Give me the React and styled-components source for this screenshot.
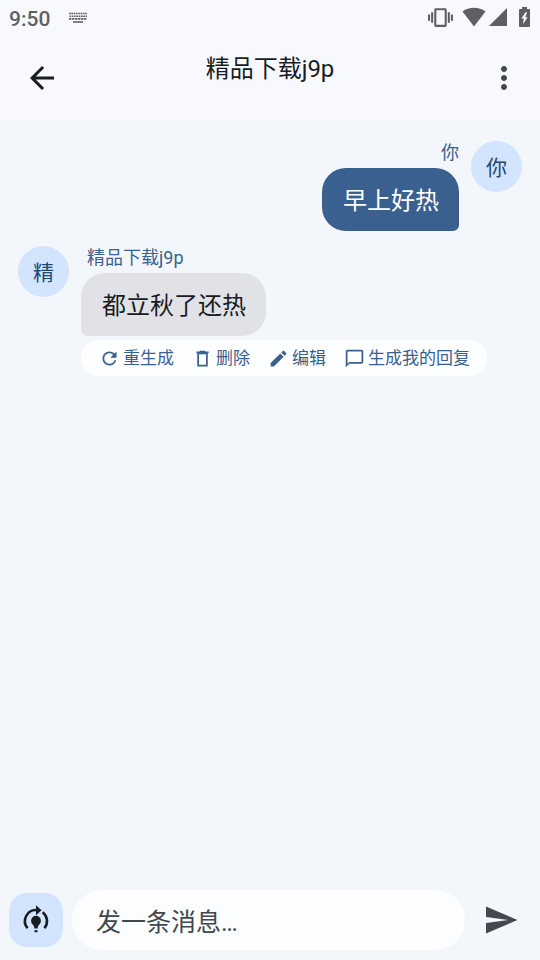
import React, { useState } from 'react'
import styled, { createGlobalStyle } from 'styled-components'
import {
    MdArrowBack,
    MdMoreVert,
    MdRefresh,
    MdEdit,
    MdChatBubbleOutline,
    MdSend,
    MdVibration,
} from 'react-icons/md'

const GlobalStyle = createGlobalStyle`
* {
box-sizing: border-box;
}
body {
margin: 0;
background: #F3F7FC;
font-family: Roboto, 'Noto Sans CJK SC', sans-serif;
color: #191C20;
}
button, input {
font-family: inherit;
border: none;
padding: 0;
}
svg {
display: block;
flex: none;
}
`;

const PageWrapper = styled.div`
display: flex;
flex-direction: column;
min-height: 100vh;
`;

const TopWrapper = styled.header`
background: #F8F9FF;
`;

const StatusBar = styled.div`
display: flex;
align-items: center;
height: 36px;
padding: 0 10px 0 9px;
color: #5F6064;
`;

const Clock = styled.span`
font-size: 21px;
font-weight: 500;
line-height: 24px;
padding-top: 2px;
margin-right: 18px;
`;

const StatusIcons = styled.div`
display: flex;
align-items: center;
margin-left: auto;
padding-bottom: 2px;
`;

const WifiIcon = styled.svg`
margin: 0 3px 0 9px;
`;

const SignalIcon = styled.svg`
margin-right: 12px;
`;

const AppBar = styled.div`
display: flex;
align-items: center;
height: 84px;
padding: 0 18px 0 24px;
`;

const IconButton = styled.button`
display: flex;
align-items: center;
justify-content: center;
background: none;
color: ${props => props.$color || '#191C20'};
cursor: pointer;
`;

const Title = styled.h1`
flex: 1;
margin: 0;
padding: 0 6px 18px 0;
font-size: 24px;
font-weight: 400;
line-height: 28px;
text-align: center;
`;

const MessageList = styled.main`
flex: 1;
display: flex;
flex-direction: column;
gap: 15px;
padding: 21px 18px;
`;

const MessageRow = styled.div`
display: flex;
flex-direction: ${props => props.$own ? 'row-reverse' : 'row'};
align-items: flex-start;
gap: 12px;
`;

const Avatar = styled.div`
display: flex;
align-items: center;
justify-content: center;
width: 51px;
height: 51px;
padding-top: 2px;
border-radius: 50%;
background: #D3E4FF;
color: #1F4876;
font-size: 21px;
line-height: 24px;
`;

const MessageBody = styled.div`
display: flex;
flex-direction: column;
align-items: ${props => props.$own ? 'flex-end' : 'flex-start'};
`;

const Sender = styled.div`
padding: ${props => props.$own ? '0' : '0 6px'};
margin-bottom: 3px;
font-size: 18px;
line-height: 24px;
color: #3A608F;
`;

const Bubble = styled.div`
padding: 18px 20px 14px 21px;
border-radius: ${props => props.$own ? '24px 24px 6px 24px' : '24px 24px 24px 6px'};
background: ${props => props.$own ? '#3A608F' : '#E1E2E8'};
color: ${props => props.$own ? '#FFFFFF' : '#191C20'};
font-size: 24px;
line-height: 31px;
`;

const Actions = styled.div`
display: flex;
align-items: center;
gap: 18px;
height: 36px;
margin-top: 4px;
padding: 0 17px 0 18px;
border-radius: 18px;
background: #FDFEFF;
`;

const ActionButton = styled.button`
display: flex;
align-items: center;
gap: 3px;
background: none;
color: #3A608F;
font-size: 17px;
line-height: 24px;
white-space: nowrap;
cursor: pointer;
`;

const Composer = styled.form`
display: flex;
align-items: center;
gap: 9px;
padding: 0 21px 10px 9px;
`;

const ModeButton = styled.button`
display: flex;
align-items: center;
justify-content: center;
width: 54px;
height: 54px;
border-radius: 18px;
background: #D3E4FF;
color: #191C20;
cursor: pointer;
`;

const MessageInput = styled.input`
flex: 1;
min-width: 0;
height: 60px;
margin-right: 9px;
padding: 4px 24px 0;
border-radius: 30px;
background: #FCFDFF;
color: #191C20;
font-size: 25px;
line-height: 30px;
outline: none;

&::placeholder {
color: #43474E;
opacity: 1;
}
`;

function DeleteIcon({ size }) {
    return (
        <svg width={size} height={size} viewBox="0 0 24 24" fill="currentColor">
            <path d="M15 4V3H9v1H5v2h1v15h12V6h1V4h-4zm1 15H8V7h8v12z" />
        </svg>
    )
}

const messages = [
    { id: 1, own: true, sender: '你', avatar: '你', text: '早上好热' },
    { id: 2, own: false, sender: '精品下载j9p', avatar: '精', text: '都立秋了还热' },
]

const actions = [
    { label: '重生成', Icon: MdRefresh },
    { label: '删除', Icon: DeleteIcon },
    { label: '编辑', Icon: MdEdit },
    { label: '生成我的回复', Icon: MdChatBubbleOutline },
]

function KeyboardIcon() {
    return (
        <svg width="20" height="12" viewBox="0 0 20 12" stroke="currentColor" fill="none">
            <path d="M1 1.5h18" strokeWidth="1.6" strokeDasharray="1.7 0.6" />
            <path d="M1.5 4.2h17.5" strokeWidth="1.6" strokeDasharray="1.7 0.6" />
            <path d="M1 6.9h18" strokeWidth="1.6" strokeDasharray="2.4 0.6" />
            <path d="M5 10h10" strokeWidth="1.6" />
        </svg>
    )
}

function BatteryIcon() {
    return (
        <svg width="11" height="20" viewBox="0 0 11 20" fill="currentColor">
            <path fillRule="evenodd" d="M3 0h5v2h2q1 0 1 1v16q0 1-1 1H1q-1 0-1-1V3q0-1 1-1h2zM6.5 5.2 2.4 11.6h2.4L4 17.2l4.6-7H6.2l1.9-5z" />
        </svg>
    )
}

function ModeIcon() {
    return (
        <svg width="36" height="36" viewBox="0 0 36 36" fill="currentColor">
            <g fill="none" stroke="currentColor" strokeWidth="2.6">
                <path d="M9.6 26.2A11 11 0 0 1 19 8.1" />
                <path d="M24.6 10.3A11 11 0 0 1 26.4 26.2" />
            </g>
            <path d="M18 3.2 23.6 8.2 18 13.2z" />
            <path d="M18 13.8a4.9 4.9 0 0 1 4.9 4.9c0 2.2-1.1 3.3-2.2 4.5q-.9 1-1.1 3.2h-3.2q-.2-2.2-1.1-3.2c-1.1-1.2-2.2-2.3-2.2-4.5a4.9 4.9 0 0 1 4.9-4.9z" />
            <path d="M16.5 28.2h3v2h-3z" />
        </svg>
    )
}

function Status() {
    return (
        <StatusBar>
            <Clock>9:50</Clock>
            <KeyboardIcon />
            <StatusIcons>
                <MdVibration size={25} />
                <WifiIcon width="24" height="20" viewBox="0 0 24 20" fill="currentColor">
                    <path d="M12 19.5 0.5 4.6C3.8 2 7.8 0.8 12 0.8s8.2 1.2 11.5 3.8z" />
                </WifiIcon>
                <SignalIcon width="18" height="18" viewBox="0 0 18 18" fill="currentColor">
                    <path d="M0 18 18 0v18z" />
                </SignalIcon>
                <BatteryIcon />
            </StatusIcons>
        </StatusBar>
    )
}

function Message({ message }) {
    const { own, sender, avatar, text } = message

    return (
        <MessageRow $own={own}>
            <Avatar>{avatar}</Avatar>
            <MessageBody $own={own}>
                <Sender $own={own}>{sender}</Sender>
                <Bubble $own={own}>{text}</Bubble>
                {!own &&
                    <Actions>
                        {actions.map(({ label, Icon }) =>
                            <ActionButton type="button" key={label}>
                                <Icon size={21} />
                                {label}
                            </ActionButton>
                        )}
                    </Actions>
                }
            </MessageBody>
        </MessageRow>
    )
}

export default function App() {
    const [draft, setDraft] = useState('')

    return (
        <PageWrapper>
            <GlobalStyle />
            <TopWrapper>
                <Status />
                <AppBar>
                    <IconButton type="button" aria-label="返回">
                        <MdArrowBack size={36} />
                    </IconButton>
                    <Title>精品下载j9p</Title>
                    <IconButton type="button" aria-label="更多" $color="#43474E">
                        <MdMoreVert size={36} />
                    </IconButton>
                </AppBar>
            </TopWrapper>
            <MessageList>
                {messages.map(message =>
                    <Message key={message.id} message={message} />
                )}
            </MessageList>
            <Composer onSubmit={e => e.preventDefault()}>
                <ModeButton type="button" aria-label="模式">
                    <ModeIcon />
                </ModeButton>
                <MessageInput
                    aria-label="消息"
                    placeholder="发一条消息…"
                    value={draft}
                    onChange={e => setDraft(e.target.value)}
                />
                <IconButton type="submit" aria-label="发送" $color="#43474E">
                    <MdSend size={36} />
                </IconButton>
            </Composer>
        </PageWrapper>
    )
}
